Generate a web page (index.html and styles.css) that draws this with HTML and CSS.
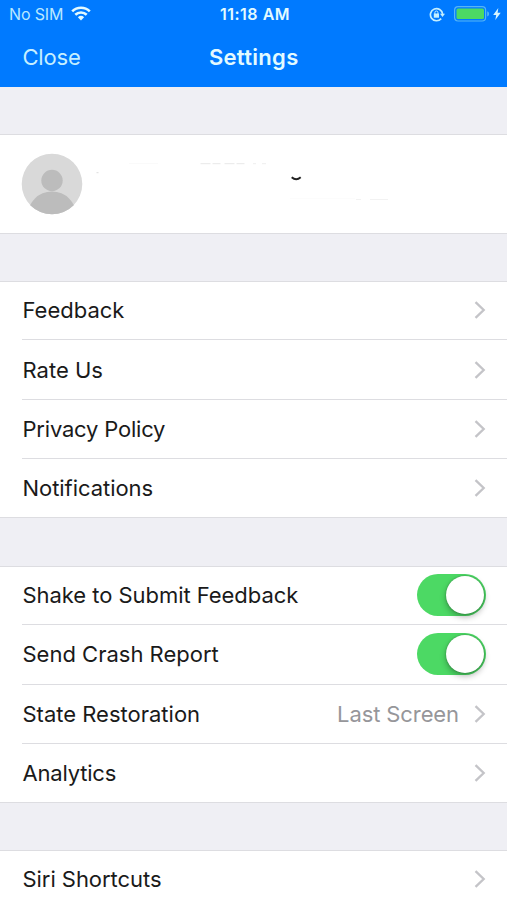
FILE: index.html
```html
<!DOCTYPE html>
<html lang="en">
<head>
<meta charset="utf-8">
<title>Settings</title>
<link rel="stylesheet" href="styles.css">
</head>
<body>
<svg class="defs" width="0" height="0" aria-hidden="true">
  <symbol id="chevron" viewBox="0 0 12 20"><path d="M1.500 2.200 9.700 10 1.500 17.800" fill="none" stroke="#c4c4c8" stroke-width="2.300"/></symbol>
</svg>
<header class="header">
  <div class="status">
    <div class="carrier">
      <span class="sim">No SIM</span>
      <svg class="wifi" width="20" height="15" viewBox="0 0 20 15" fill="none" stroke="#e3faff" stroke-width="2.600"><path d="M1.200 5.400a12.600 12.600 0 0 1 17.600 0M4.300 8.800a8.200 8.200 0 0 1 11.400 0"/><path d="M10 14.500 6.900 11.300a4.500 4.500 0 0 1 6.200 0z" fill="#e3faff" stroke="none"/></svg>
    </div>
    <span class="time">11:18 AM</span>
    <div class="indicators">
      <svg width="17" height="15" viewBox="0 0 17 15" fill="none" stroke="#c4efff"><path d="M12.200 11.600A6.100 6.100 0 1 1 13.600 7" stroke-width="1.700"/><path d="m11 6.800 5 0-2.500 3.200z" fill="#c4efff" stroke="none"/><path d="M4.800 6.500h5.200v4.200H4.800z" fill="#c4efff" stroke="none"/><path d="M5.900 7V5.500a1.500 1.500 0 0 1 3 0V7"/></svg>
      <svg class="battery" width="36" height="16" viewBox="0 0 36 16"><rect x=".6" y=".6" width="31" height="14.400" rx="3.500" fill="none" stroke="#55b5f5" stroke-width="1.200"/><rect x="2.500" y="2.500" width="27.500" height="10.500" rx="1.500" fill="#4cd964"/><path d="M33.200 5.200c2.500.9 2.500 4.300 0 5.200z" fill="#55b5f5"/></svg>
      <svg class="bolt" width="8" height="12" viewBox="0 0 8 12"><path d="M5.300 0 .2 6.900h3L2.300 12l5.400-7.300H4.600z" fill="#d8f5ff"/></svg>
    </div>
  </div>
  <nav class="nav">
    <span class="close">Close</span>
    <h1 class="title">Settings</h1>
  </nav>
</header>
<main>
  <section class="profile">
    <svg class="avatar" width="62" height="62" viewBox="0 0 62 62"><defs><clipPath id="face"><circle cx="31" cy="31" r="30.300"/></clipPath></defs><g clip-path="url(#face)"><circle cx="31" cy="31" r="31" fill="#d9d9d9"/><circle cx="31" cy="27.500" r="10.700" fill="#bcbcbc"/><circle cx="31" cy="63" r="24.500" fill="#bcbcbc"/></g></svg>
    <svg class="marks" width="300" height="60" viewBox="0 0 300 60" fill="none"><path d="M206.700 23.200q4.500 4 9 0" stroke="#222" stroke-width="1.900"/><path d="M115.500 9.700h48" stroke="#e8e8e8" stroke-dasharray="10 2 8 4"/><path d="M168 9.700h3m6 0h4" stroke="#eee"/><path d="M44 9.500h29" stroke="#fafafa"/><path d="M11.500 18.700h2" stroke="#ddd"/><path d="M205 44.500h65" stroke="#fcfcfc"/><path d="M271 45.500h5m9 0h18" stroke="#f2f2f2"/></svg>
  </section>
  <section class="group">
    <div class="row"><span class="label">Feedback</span><svg class="chevron"><use href="#chevron"/></svg></div>
    <div class="row"><span class="label">Rate Us</span><svg class="chevron"><use href="#chevron"/></svg></div>
    <div class="row"><span class="label tight">Privacy Policy</span><svg class="chevron"><use href="#chevron"/></svg></div>
    <div class="row"><span class="label snug">Notifications</span><svg class="chevron"><use href="#chevron"/></svg></div>
  </section>
  <section class="group switches">
    <div class="row"><span class="label snug">Shake to Submit Feedback</span><span class="toggle"><span class="knob"></span></span></div>
    <div class="row"><span class="label">Send Crash Report</span><span class="toggle"><span class="knob"></span></span></div>
    <div class="row"><span class="label">State Restoration</span><span class="value">Last Screen</span><svg class="chevron"><use href="#chevron"/></svg></div>
    <div class="row"><span class="label tight">Analytics</span><svg class="chevron"><use href="#chevron"/></svg></div>
  </section>
  <section class="group last">
    <div class="row"><span class="label snug">Siri Shortcuts</span><svg class="chevron"><use href="#chevron"/></svg></div>
  </section>
</main>
</body>
</html>
```
FILE: styles.css
```css
* { box-sizing: border-box; }
body {
  margin: 0;
  height: 900px;
  overflow: hidden;
  background: #efeff4;
  color: #1a1a1a;
  font: 22px/28px Inter, "Liberation Sans", sans-serif;
}
svg { display: block; flex: none; }
.defs { position: absolute; }
.header { height: 87px; background: #007aff; color: #e3faff; }
.status {
  display: grid;
  grid-template-columns: 1fr auto 1fr;
  align-items: center;
  height: 28px;
  padding: 0 6px 0 9px;
  font-size: 16px;
  line-height: 20px;
}
.carrier, .indicators { display: flex; align-items: center; }
.sim { color: #b9e8ff; letter-spacing: -0.15px; }
.wifi { margin-left: 8px; margin-top: -1px; }
.time { font-weight: 600; font-size: 16px; letter-spacing: 0.5px; }
.indicators { justify-content: flex-end; }
.battery { margin-left: 8px; }
.bolt { margin-left: 3px; }
.nav {
  display: grid;
  grid-template-columns: 1fr auto 1fr;
  align-items: center;
  height: 58px;
  padding-left: 22.5px;
  padding-right: 22px;
}
.close { color: #c5efff; letter-spacing: -0.2px; }
.title { margin: 0; font-size: 22px; line-height: 28px; font-weight: 600; letter-spacing: 0.3px; }
.profile {
  display: flex;
  align-items: center;
  height: 100px;
  margin-top: 47px;
  padding-left: 20.5px;
  background: #fff;
  border-top: 1px solid #dddde1;
  border-bottom: 1px solid #dddde1;
}
.marks { margin-left: 2px; overflow: visible; }
.group { margin-top: 47px; background: #fff; border-top: 1px solid #dddde1; }
.group + .group { margin-top: 48px; }
.group + .last { margin-top: 47px; }
.row {
  display: flex;
  align-items: center;
  height: 59px;
  margin-left: 22px;
  padding-left: 0.5px;
  padding-right: 21px;
  border-bottom: 1px solid #dddde1;
}
.row:first-child { height: 58px; padding-bottom: 1px; }
.row:nth-child(2) { height: 60px; }
.switches .row:nth-child(2) { padding-bottom: 2px; }
.switches .row:first-child { padding-bottom: 2px; }
.row:last-child { margin-left: 0; padding-left: 22.5px; }
.label { margin-right: auto; white-space: nowrap; }
.tight { letter-spacing: -0.2px; }
.snug { letter-spacing: -0.05px; }
.chevron { width: 12px; height: 20px; }
.value { margin-right: 15px; color: #96969a; letter-spacing: -0.1px; }
.toggle {
  display: flex;
  align-items: center;
  justify-content: flex-end;
  width: 69px;
  height: 42px;
  padding: 2px;
  border-radius: 21px;
  background: #4cd964;
}
.knob {
  width: 38px;
  height: 38px;
  border-radius: 50%;
  background: #fff;
  box-shadow: 0 3px 6px rgba(0, 0, 0, 0.3), 0 0 2px rgba(0, 0, 0, 0.3);
}
```
